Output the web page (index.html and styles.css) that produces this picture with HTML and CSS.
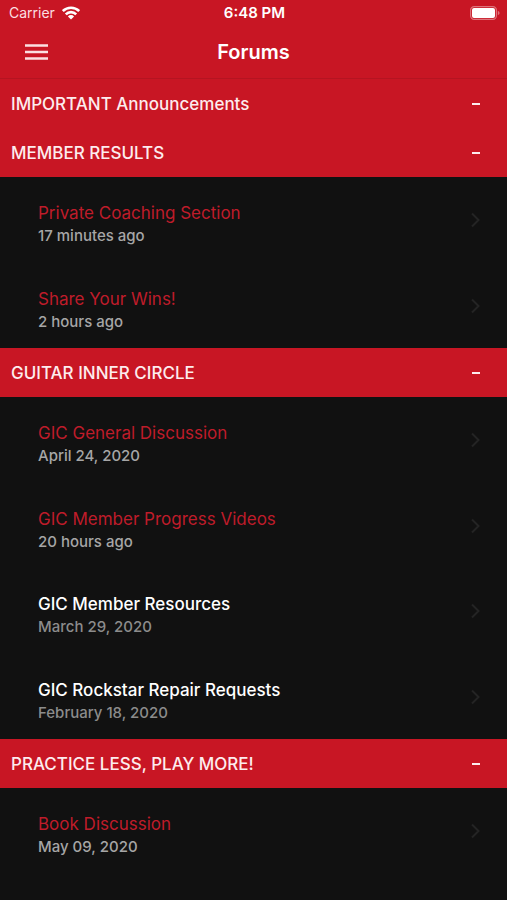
FILE: index.html
```html
<!DOCTYPE html>
<html lang="en">
<head>
<meta charset="utf-8">
<meta name="viewport" content="width=device-width, initial-scale=1">
<title>Forums</title>
<link rel="stylesheet" href="styles.css">
</head>
<body>
<svg class="sprite" aria-hidden="true">
  <symbol id="chevron" viewBox="0 0 10 16"><path d="M1 1.500 7.500 8 1 14.500" fill="none" stroke="currentColor" stroke-width="2"/></symbol>
</svg>
<header class="top">
  <div class="status">
    <div class="carrier">
      <span>Carrier</span>
      <svg class="wifi" viewBox="0 0 18 14" aria-hidden="true">
        <g fill="none" stroke="currentColor" stroke-width="2.600">
          <path d="M.8 5.100a11.600 11.600 0 0 1 16.400 0"/>
          <path d="M3.800 8.300a7.400 7.400 0 0 1 10.400 0"/>
        </g>
        <path d="M5.900 10.400a4.400 4.400 0 0 1 6.200 0L9 13.500z" fill="currentColor"/>
      </svg>
    </div>
    <span class="time">6:48 PM</span>
    <svg class="battery" viewBox="0 0 30 14" aria-hidden="true">
      <rect x=".6" y=".6" width="25.800" height="12.800" rx="3.600" fill="none" stroke="currentColor" stroke-opacity=".4" stroke-width="1.200"/>
      <rect x="2" y="2" width="23" height="10" rx="2" fill="currentColor"/>
      <path d="M27.800 4.800q1.800.8 1.800 2.200t-1.800 2.200z" fill="currentColor" fill-opacity=".4"/>
    </svg>
  </div>
  <nav class="bar">
    <button class="menu" type="button" aria-label="Menu">
      <svg viewBox="0 0 23 16" aria-hidden="true"><path d="M0 1.500h23M0 8h23M0 14.500h23" stroke="currentColor" stroke-width="2.600"/></svg>
    </button>
    <h1>Forums</h1>
  </nav>
</header>
<main>
  <section>
    <h2><button class="group" type="button" aria-expanded="true"><span>IMPORTANT Announcements</span><i class="minus"></i></button></h2>
  </section>
  <section>
    <h2><button class="group" type="button" aria-expanded="true"><span>MEMBER RESULTS</span><i class="minus"></i></button></h2>
    <ul class="forums">
      <li><a class="forum unread" href="#"><span class="text"><span class="name">Private Coaching Section</span><span class="date">17 minutes ago</span></span><svg class="chevron" aria-hidden="true"><use href="#chevron"/></svg></a></li>
      <li><a class="forum unread" href="#"><span class="text"><span class="name">Share Your Wins!</span><span class="date">2 hours ago</span></span><svg class="chevron" aria-hidden="true"><use href="#chevron"/></svg></a></li>
    </ul>
  </section>
  <section>
    <h2><button class="group" type="button" aria-expanded="true"><span>GUITAR INNER CIRCLE</span><i class="minus"></i></button></h2>
    <ul class="forums">
      <li><a class="forum unread" href="#"><span class="text"><span class="name">GIC General Discussion</span><span class="date">April 24, 2020</span></span><svg class="chevron" aria-hidden="true"><use href="#chevron"/></svg></a></li>
      <li><a class="forum unread" href="#"><span class="text"><span class="name">GIC Member Progress Videos</span><span class="date">20 hours ago</span></span><svg class="chevron" aria-hidden="true"><use href="#chevron"/></svg></a></li>
      <li><a class="forum" href="#"><span class="text"><span class="name">GIC Member Resources</span><span class="date">March 29, 2020</span></span><svg class="chevron" aria-hidden="true"><use href="#chevron"/></svg></a></li>
      <li><a class="forum" href="#"><span class="text"><span class="name">GIC Rockstar Repair Requests</span><span class="date">February 18, 2020</span></span><svg class="chevron" aria-hidden="true"><use href="#chevron"/></svg></a></li>
    </ul>
  </section>
  <section>
    <h2><button class="group" type="button" aria-expanded="true"><span>PRACTICE LESS, PLAY MORE!</span><i class="minus"></i></button></h2>
    <ul class="forums">
      <li><a class="forum unread" href="#"><span class="text"><span class="name">Book Discussion</span><span class="date">May 09, 2020</span></span><svg class="chevron" aria-hidden="true"><use href="#chevron"/></svg></a></li>
    </ul>
  </section>
</main>
</body>
</html>
```
FILE: styles.css
```css
* { box-sizing: border-box; }

body {
  margin: 0;
  background: #111;
  color: #fff;
  font-family: Inter, "Liberation Sans", sans-serif;
}

.sprite { position: absolute; width: 0; height: 0; }

.top {
  background: #c81624;
  border-bottom: 1px solid #b51421;
}

.status {
  display: grid;
  grid-template-columns: 1fr auto 1fr;
  align-items: center;
  height: 26px;
  padding: 0 7px 0 9px;
  font-size: 14px;
  line-height: 26px;
}

.carrier {
  display: flex;
  align-items: center;
  gap: 7px;
  color: #fbdfe1;
}

.wifi { width: 18px; height: 14px; color: #fff; }
.time { font-size: 15px; font-weight: 600; }
.battery { width: 30px; height: 14px; justify-self: end; }

.bar {
  display: grid;
  grid-template-columns: 72px 1fr 72px;
  align-items: center;
  height: 52px;
}

.menu {
  display: flex;
  justify-content: center;
  padding: 12px 0;
  border: 0;
  background: none;
  color: #fbdfe1;
}

.menu svg { width: 23px; height: 16px; }

h1 {
  margin: 0;
  font-size: 20px;
  font-weight: 600;
  line-height: 24px;
  text-align: center;
}

h2 { margin: 0; font-size: 17px; }

.group {
  display: flex;
  align-items: center;
  justify-content: space-between;
  width: 100%;
  height: 49px;
  padding: 0 27px 0 11px;
  border: 0;
  background: #c81624;
  color: #fdecee;
  font: 500 17px/24px Inter, "Liberation Sans", sans-serif;
  text-align: left;
}

.minus { width: 8px; height: 2px; background: #fdecee; }

.forums {
  display: grid;
  grid-auto-rows: 86px 85px;
  margin: 0;
  padding: 0;
  list-style: none;
}

.forum {
  display: flex;
  align-items: center;
  justify-content: space-between;
  height: 100%;
  padding: 0 26px 0 38px;
  color: #fff;
  text-decoration: none;
}

.text { display: flex; flex-direction: column; padding-top: 8px; }
.name { font-size: 17px; font-weight: 500; line-height: 24px; }
.date { color: #8c8c8c; font-size: 15px; font-weight: 500; line-height: 22px; }
.unread .name { color: #bf1c2a; font-weight: 400; }
.unread .date { color: #a6a6a6; }
.chevron { width: 10px; height: 16px; color: #242424; }
```
